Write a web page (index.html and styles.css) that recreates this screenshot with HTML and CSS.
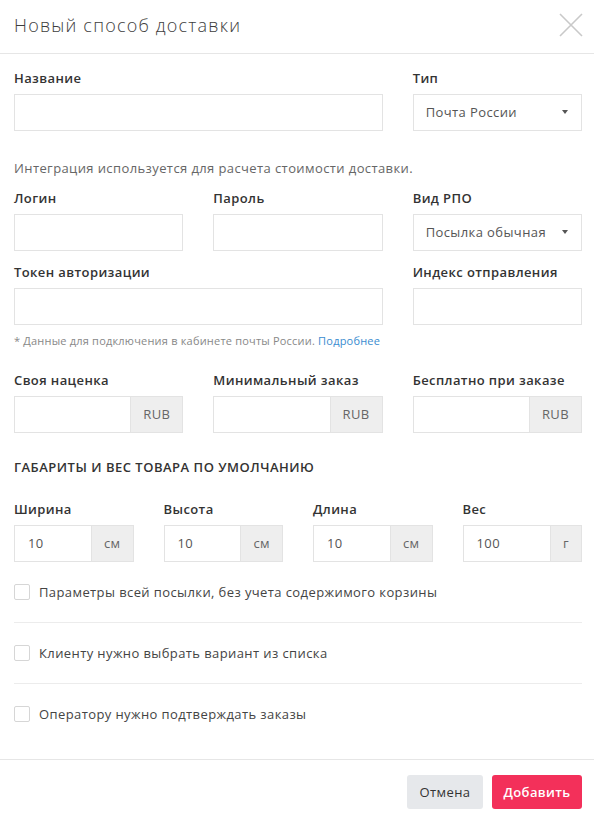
FILE: index.html
```html
<!DOCTYPE html>
<html lang="ru">
<head>
<meta charset="utf-8">
<title>Новый способ доставки</title>
<link rel="stylesheet" href="styles.css">
</head>
<body>
<div class="modal">
  <div class="modal-header">
    <div class="modal-title">Новый способ доставки</div>
    <button class="close" aria-label="Закрыть">
      <svg width="24" height="24" viewBox="0 0 24 24"><path d="M1 1L23 23M23 1L1 23" stroke="#c9c9c9" stroke-width="1.6" fill="none"/></svg>
    </button>
  </div>
  <div class="modal-body">
    <div class="grid3 row-first">
      <div class="field span2">
        <label class="label">Название</label>
        <div class="input"></div>
      </div>
      <div class="field">
        <label class="label">Тип</label>
        <div class="input select"><span>Почта России</span><i class="caret"></i></div>
      </div>
    </div>

    <p class="info">Интеграция используется для расчета стоимости доставки.</p>

    <div class="grid3">
      <div class="field">
        <label class="label">Логин</label>
        <div class="input"></div>
      </div>
      <div class="field">
        <label class="label">Пароль</label>
        <div class="input"></div>
      </div>
      <div class="field">
        <label class="label">Вид РПО</label>
        <div class="input select"><span>Посылка обычная</span><i class="caret"></i></div>
      </div>
    </div>

    <div class="grid3 row-token">
      <div class="field span2">
        <label class="label">Токен авторизации</label>
        <div class="input"></div>
      </div>
      <div class="field">
        <label class="label">Индекс отправления</label>
        <div class="input"></div>
      </div>
    </div>

    <p class="note">* Данные для подключения в кабинете почты России. <a href="#">Подробнее</a></p>

    <div class="grid3 row-price">
      <div class="field">
        <label class="label">Своя наценка</label>
        <div class="group"><div class="input grow"></div><div class="addon">RUB</div></div>
      </div>
      <div class="field">
        <label class="label">Минимальный заказ</label>
        <div class="group"><div class="input grow"></div><div class="addon">RUB</div></div>
      </div>
      <div class="field">
        <label class="label">Бесплатно при заказе</label>
        <div class="group"><div class="input grow"></div><div class="addon">RUB</div></div>
      </div>
    </div>

    <h3 class="section">ГАБАРИТЫ И ВЕС ТОВАРА ПО УМОЛЧАНИЮ</h3>

    <div class="grid4">
      <div class="field">
        <label class="label">Ширина</label>
        <div class="group"><div class="input grow value">10</div><div class="addon">см</div></div>
      </div>
      <div class="field">
        <label class="label">Высота</label>
        <div class="group"><div class="input grow value">10</div><div class="addon">см</div></div>
      </div>
      <div class="field">
        <label class="label">Длина</label>
        <div class="group"><div class="input grow value">10</div><div class="addon">см</div></div>
      </div>
      <div class="field">
        <label class="label">Вес</label>
        <div class="group"><div class="input grow value">100</div><div class="addon">г</div></div>
      </div>
    </div>

    <div class="checks">
      <label class="check"><span class="box"></span>Параметры всей посылки, без учета содержимого корзины</label>
      <label class="check"><span class="box"></span>Клиенту нужно выбрать вариант из списка</label>
      <label class="check"><span class="box"></span>Оператору нужно подтверждать заказы</label>
    </div>
  </div>
  <div class="modal-footer">
    <button class="btn btn-cancel">Отмена</button>
    <button class="btn btn-primary">Добавить</button>
  </div>
</div>
</body>
</html>
```

FILE: styles.css
```css
* { box-sizing: border-box; }
html, body { margin: 0; padding: 0; background: #fff; }
body {
  font-family: "Open Sans", Roboto, "Liberation Sans", Arial, sans-serif;
  color: #444;
  font-size: 13px;
  letter-spacing: 0.4px;
  width: 594px;
}
.modal { width: 594px; }
.modal-header {
  height: 54px;
  border-bottom: 1px solid #e6e6e6;
  display: flex;
  align-items: center;
  justify-content: space-between;
  padding: 0 11px 4px 14px;
}
.modal-title {
  font-size: 18px;
  font-weight: 300;
  color: #3d3d3d;
  letter-spacing: 1.2px;
}
.close {
  border: 0;
  background: none;
  padding: 0;
  width: 24px;
  height: 24px;
  display: block;
}
.close svg { display: block; }
.modal-body { padding: 14px 12px 15px 14px; }
.grid3 {
  display: grid;
  grid-template-columns: repeat(3, 1fr);
  column-gap: 30px;
}
.grid4 {
  display: grid;
  grid-template-columns: repeat(4, 1fr);
  column-gap: 30px;
}
.span2 { grid-column: span 2; }
.field { display: flex; flex-direction: column; min-width: 0; }
.label {
  font-weight: 600;
  font-size: 13px;
  line-height: 20px;
  color: #333;
  margin-bottom: 6px;
  white-space: nowrap;
}
.input {
  height: 37px;
  border: 1px solid #e3e3e3;
  background: #fff;
  display: flex;
  align-items: center;
  padding: 0 12px 1px;
  color: #555;
  font-size: 13px;
}
.select { justify-content: space-between; padding-right: 13px; }
.select span { color: #555; }
.caret {
  width: 0; height: 0;
  border-left: 3.5px solid transparent;
  border-right: 3.5px solid transparent;
  border-top: 4px solid #555;
}
.info {
  margin: 27px 0 10px;
  line-height: 20px;
  font-size: 13px;
  color: #666;
}
.row-token { margin-top: 11px; }
.note {
  margin: 8px 0 0;
  font-size: 11px;
  line-height: 16px;
  color: #888;
  letter-spacing: 0.2px;
}
.note a { color: #3a8cd0; text-decoration: none; }
.row-price { margin-top: 21px; }
.group { display: flex; height: 37px; }
.group .grow { flex: 1; min-width: 0; border-right: 0; }
.value { padding-left: 13px; color: #555; }
.addon {
  background: #eeeeee;
  border: 1px solid #e3e3e3;
  display: flex;
  align-items: center;
  padding: 0 12px 1px;
  color: #666;
  font-size: 13px;
}
.section {
  margin: 24px 0 22px;
  font-size: 13px;
  line-height: 20px;
  font-weight: 600;
  color: #333;
  letter-spacing: 0.5px;
}
.checks { display: flex; flex-direction: column; }
.check {
  display: flex;
  align-items: center;
  padding: 22px 0;
  line-height: 16px;
  font-size: 13px;
  color: #444;
  border-bottom: 1px solid #ececec;
}
.check:last-child { border-bottom: 0; }
.box {
  width: 16px;
  height: 16px;
  border: 1px solid #d6d6d6;
  border-radius: 2px;
  margin-right: 9px;
  flex: none;
}
.modal-footer {
  border-top: 1px solid #e6e6e6;
  display: flex;
  justify-content: flex-end;
  gap: 9px;
  padding: 15px 12px 13px;
}
.btn {
  height: 34px;
  border: 0;
  border-radius: 3px;
  font-family: inherit;
  font-size: 13px;
  letter-spacing: 0.4px;
  padding: 0;
}
.btn-cancel { background: #e6e8eb; color: #333; width: 76px; }
.btn-primary { background: #f3305a; color: #fff; font-weight: 600; width: 90px; }
```
